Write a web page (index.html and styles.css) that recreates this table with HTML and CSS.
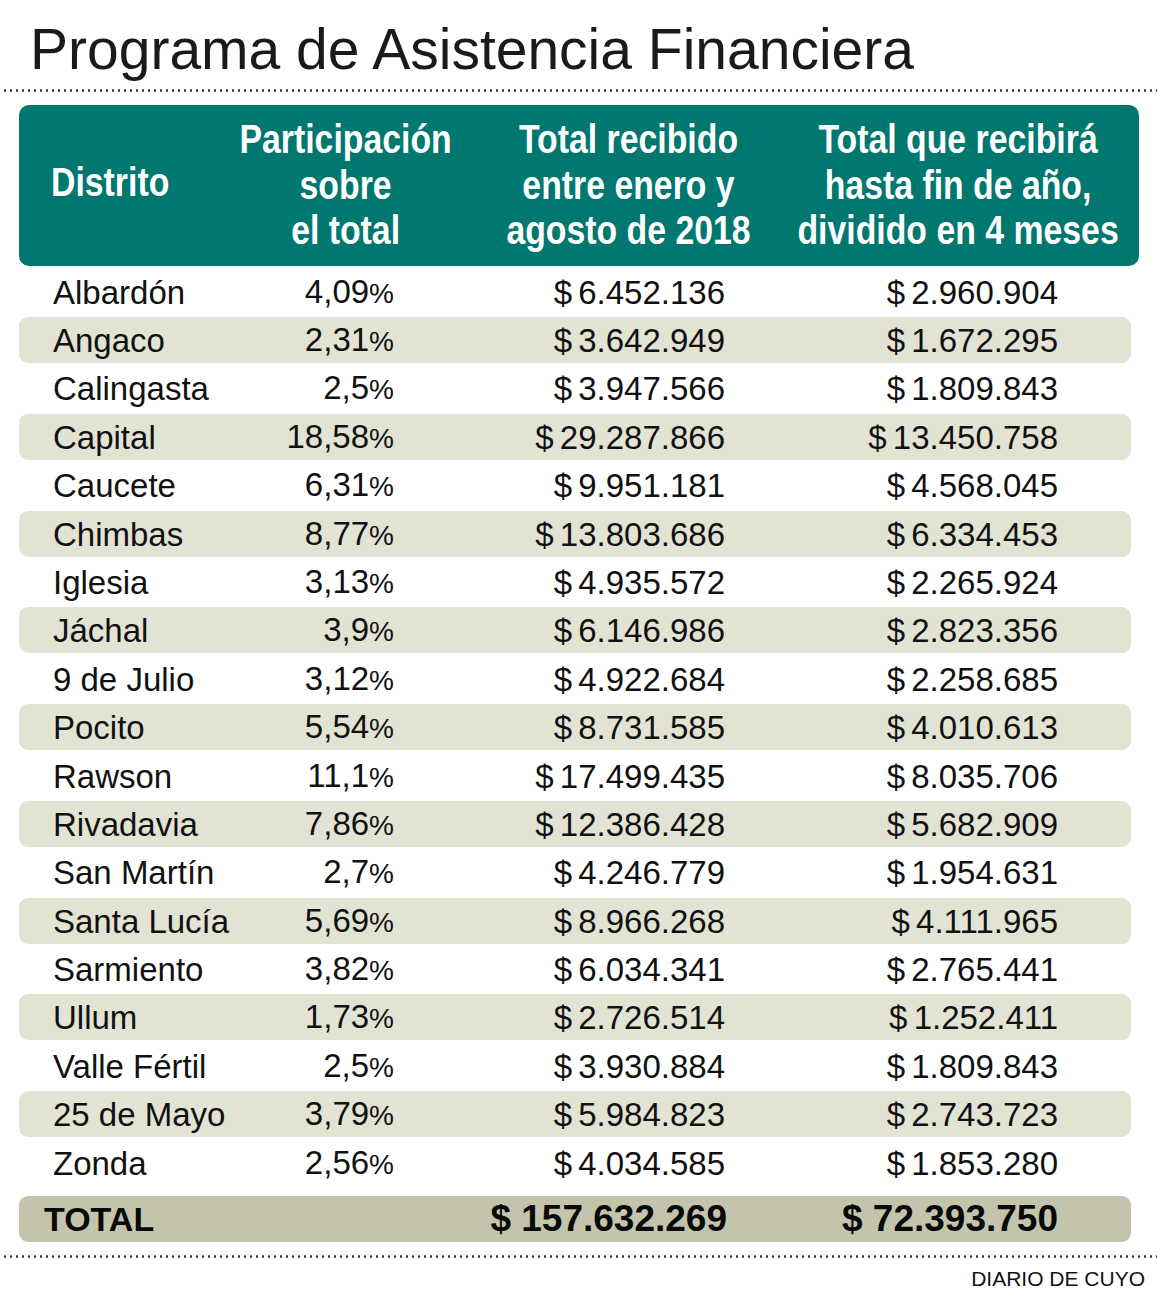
FILE: index.html
```html
<!DOCTYPE html>
<html lang="es">
<head>
<meta charset="utf-8">
<title>Programa de Asistencia Financiera</title>
<link rel="stylesheet" href="styles.css">
</head>
<body>
<div class="page">
  <h1 class="title">Programa de Asistencia Financiera</h1>
  <div class="dots"></div>
  <div class="head">
    <div class="h h-name"><span class="nar">Distrito</span></div>
    <div class="h"><span class="nar">Participación<br>sobre<br>el total</span></div>
    <div class="h"><span class="nar">Total recibido<br>entre enero y<br>agosto de 2018</span></div>
    <div class="h"><span class="nar">Total que recibirá<br>hasta fin de año,<br>dividido en 4 meses</span></div>
  </div>
  <div class="rows">
    <div class="row"><span class="c-name">Albardón</span><span class="c-num">4,09<span class="pc">%</span></span><span class="c-num">$ 6.452.136</span><span class="c-num">$ 2.960.904</span></div>
    <div class="row alt"><span class="c-name">Angaco</span><span class="c-num">2,31<span class="pc">%</span></span><span class="c-num">$ 3.642.949</span><span class="c-num">$ 1.672.295</span></div>
    <div class="row"><span class="c-name">Calingasta</span><span class="c-num">2,5<span class="pc">%</span></span><span class="c-num">$ 3.947.566</span><span class="c-num">$ 1.809.843</span></div>
    <div class="row alt"><span class="c-name">Capital</span><span class="c-num">18,58<span class="pc">%</span></span><span class="c-num">$ 29.287.866</span><span class="c-num">$ 13.450.758</span></div>
    <div class="row"><span class="c-name">Caucete</span><span class="c-num">6,31<span class="pc">%</span></span><span class="c-num">$ 9.951.181</span><span class="c-num">$ 4.568.045</span></div>
    <div class="row alt"><span class="c-name">Chimbas</span><span class="c-num">8,77<span class="pc">%</span></span><span class="c-num">$ 13.803.686</span><span class="c-num">$ 6.334.453</span></div>
    <div class="row"><span class="c-name">Iglesia</span><span class="c-num">3,13<span class="pc">%</span></span><span class="c-num">$ 4.935.572</span><span class="c-num">$ 2.265.924</span></div>
    <div class="row alt"><span class="c-name">Jáchal</span><span class="c-num">3,9<span class="pc">%</span></span><span class="c-num">$ 6.146.986</span><span class="c-num">$ 2.823.356</span></div>
    <div class="row"><span class="c-name">9 de Julio</span><span class="c-num">3,12<span class="pc">%</span></span><span class="c-num">$ 4.922.684</span><span class="c-num">$ 2.258.685</span></div>
    <div class="row alt"><span class="c-name">Pocito</span><span class="c-num">5,54<span class="pc">%</span></span><span class="c-num">$ 8.731.585</span><span class="c-num">$ 4.010.613</span></div>
    <div class="row"><span class="c-name">Rawson</span><span class="c-num">11,1<span class="pc">%</span></span><span class="c-num">$ 17.499.435</span><span class="c-num">$ 8.035.706</span></div>
    <div class="row alt"><span class="c-name">Rivadavia</span><span class="c-num">7,86<span class="pc">%</span></span><span class="c-num">$ 12.386.428</span><span class="c-num">$ 5.682.909</span></div>
    <div class="row"><span class="c-name">San Martín</span><span class="c-num">2,7<span class="pc">%</span></span><span class="c-num">$ 4.246.779</span><span class="c-num">$ 1.954.631</span></div>
    <div class="row alt"><span class="c-name">Santa Lucía</span><span class="c-num">5,69<span class="pc">%</span></span><span class="c-num">$ 8.966.268</span><span class="c-num">$ 4.111.965</span></div>
    <div class="row"><span class="c-name">Sarmiento</span><span class="c-num">3,82<span class="pc">%</span></span><span class="c-num">$ 6.034.341</span><span class="c-num">$ 2.765.441</span></div>
    <div class="row alt"><span class="c-name">Ullum</span><span class="c-num">1,73<span class="pc">%</span></span><span class="c-num">$ 2.726.514</span><span class="c-num">$ 1.252.411</span></div>
    <div class="row"><span class="c-name">Valle Fértil</span><span class="c-num">2,5<span class="pc">%</span></span><span class="c-num">$ 3.930.884</span><span class="c-num">$ 1.809.843</span></div>
    <div class="row alt"><span class="c-name">25 de Mayo</span><span class="c-num">3,79<span class="pc">%</span></span><span class="c-num">$ 5.984.823</span><span class="c-num">$ 2.743.723</span></div>
    <div class="row"><span class="c-name">Zonda</span><span class="c-num">2,56<span class="pc">%</span></span><span class="c-num">$ 4.034.585</span><span class="c-num">$ 1.853.280</span></div>
  </div>
  <div class="row total"><span class="c-name">TOTAL</span><span class="c-num"></span><span class="c-num">$ 157.632.269</span><span class="c-num">$ 72.393.750</span></div>
  <div class="dots dots-bottom"></div>
  <div class="credit">DIARIO DE CUYO</div>
</div>
</body>
</html>
```

FILE: styles.css
```css
html, body {
  margin: 0;
  padding: 0;
  background: #ffffff;
}

.page {
  width: 1157px;
  font-family: "Liberation Sans", Arial, sans-serif;
  color: #111111;
}

.title {
  margin: 0;
  padding: 17px 0 0 30px;
  font-size: 57px;
  font-weight: normal;
  line-height: 64px;
  color: #1a1a1a;
}

.dots {
  margin-top: 8px;
  height: 3px;
  background-image: radial-gradient(circle, #2e2e2e 1px, transparent 1.4px);
  background-size: 6px 3px;
  background-position: 2px 0;
}

.head {
  margin: 13px 18px 0 19px;
  height: 161px;
  background: #00776f;
  border-radius: 10px;
  display: grid;
  grid-template-columns: 180px 230px 336px 322px;
  padding-left: 32px;
  align-items: center;
  box-sizing: border-box;
  color: #ffffff;
}

.h {
  display: flex;
  justify-content: center;
  font-family: "Liberation Sans", Arial, sans-serif;
  font-weight: bold;
  font-size: 40px;
  line-height: 45.5px;
  text-align: center;
  white-space: nowrap;
}

.nar {
  display: inline-block;
  flex: none;
  transform: scaleX(0.845);
  transform-origin: 50% 50%;
}

.h-name {
  justify-content: flex-start;
  text-align: left;
  padding-bottom: 6px;
}

.h-name .nar {
  transform-origin: 0 50%;
}

.rows {
  margin-top: 2.6px;
  display: flex;
  flex-direction: column;
  gap: 2.4px;
}

.row {
  margin: 0 26px 0 19px;
  height: 46px;
  display: grid;
  grid-template-columns: 200px 141px 331px 333px;
  padding-left: 34px;
  align-items: center;
  border-radius: 9px;
  font-size: 33px;
  line-height: 46px;
  padding-top: 0;
  box-sizing: border-box;
}

.alt {
  background: #e3e3d4;
}

.c-name {
  text-align: left;
  white-space: nowrap;
}

.c-num {
  text-align: right;
  white-space: nowrap;
  word-spacing: -3px;
}

.pc {
  font-size: 28px;
}

.total {
  margin-top: 10px;
  background: #c4c4ac;
  font-weight: bold;
  font-size: 34px;
  padding-left: 25px;
  grid-template-columns: 209px 141px 333px 331px;
  color: #0a0a0a;
}

.total .c-num {
  font-size: 37px;
  word-spacing: 0;
}

.dots-bottom {
  margin-top: 13px;
}

.credit {
  text-align: right;
  padding-right: 12px;
  margin-top: 9px;
  font-size: 21px;
  line-height: 24px;
  color: #111111;
}
```
